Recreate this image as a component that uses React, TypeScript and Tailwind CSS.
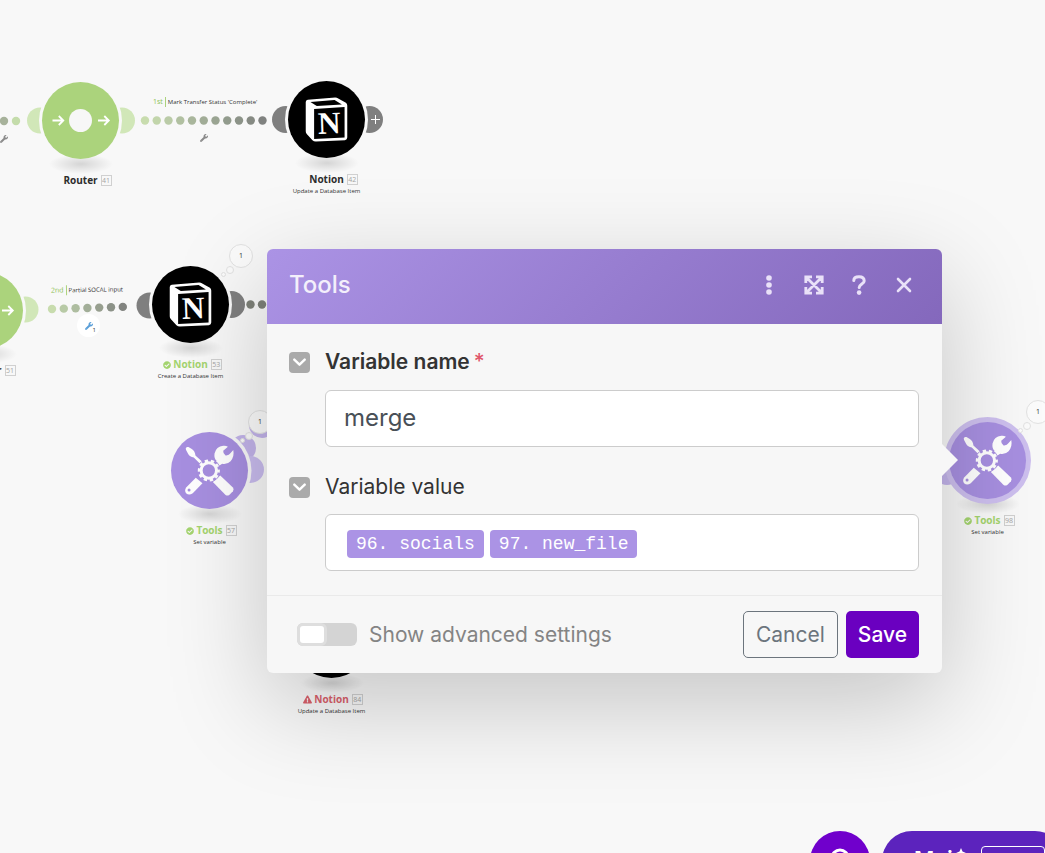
import React, { useState } from 'react';
import { FaCheckCircle, FaExclamationTriangle, FaWrench } from 'react-icons/fa';

const NotionIcon: React.FC = () => (
  <svg viewBox="85 34 230 230" className="w-full h-full" aria-hidden="true">
    <path
      d="M144 90 L226 83 Q231 83 235 86 L258 99 Q262 102 262 107 L262 203 Q262 210 255 211 L168 215 Q162 215 158 211 L141 192 Q138 189 138 184 L138 97 Q138 91 144 90 Z"
      fill="#fff"
    />
    <path d="M152 97 L224 91 L246 104 L171 109 Z" fill="#000" />
    <path d="M163 118 L254 112 L254 203 L163 207 Z" fill="#000" />
    <text x="208" y="191" textAnchor="middle" fontSize="94" fontWeight="700" fill="#fff" fontFamily="'Liberation Serif', serif" transform="rotate(-2 208 161)">
      N
    </text>
  </svg>
);

const ToolsIcon: React.FC = () => (
  <svg viewBox="73 98 230 230" className="w-full h-full" fill="#fff" aria-hidden="true">
    {/* screwdriver */}
    <path d="M117 147 Q118 141 125 143 L134 148 Q145 155 146 168 L168 188 L162 195 L141 174 Q129 173 124 163 L118 152 Z" />
    {/* wrench head */}
    <path d="M203 192 L209 184 Q201 176 203 162 Q208 141 229 139 Q237 138 243 142 L229 154 Q228 163 236 168 Q246 169 251 161 L259 152 Q263 172 251 185 Q240 196 226 193 L212 202 Z" />
    {/* handles */}
    <path d="M147 235 L167 251 L138 281 Q127 289 118 281 Q112 272 119 263 Z" />
    <circle cx="127" cy="271" r="4.5" fill="#a78fe0" />
    <path d="M198 247 L220 228 L258 264 Q262 269 258 275 L247 286 Q241 290 236 286 Z" />
    {/* gear */}
    <circle cx="186" cy="213" r="35" fill="#a78fe0" />
    <circle cx="186" cy="213" r="23" fill="none" stroke="#fff" strokeWidth="9" />
    <circle cx="186" cy="213" r="29" fill="none" stroke="#fff" strokeWidth="8" strokeDasharray="10 8.22" strokeDashoffset="4" />
  </svg>
);

const RouterIcon: React.FC = () => (
  <svg viewBox="0 0 77 77" className="w-full h-full" aria-hidden="true">
    <circle cx="38.5" cy="38.5" r="11.5" fill="#f7f7f7" />
    <g fill="none" stroke="#fff" strokeWidth="1.8">
      <path d="M10.500 38.500h10.500M16.800 34l4.500 4.500-4.500 4.500" />
      <path d="M56 38.500h10.500M62.300 34l4.500 4.500-4.500 4.500" />
    </g>
  </svg>
);

const kinds = {
  router: { bg: 'bg-[#abd37c]', icon: <RouterIcon /> },
  notion: { bg: 'bg-black', icon: <NotionIcon /> },
  tools: { bg: 'bg-[#a78fe0]', icon: <ToolsIcon /> },
};

interface NodeProps {
  kind: keyof typeof kinds;
  place: string;
  title: string;
  id: number;
  subtitle?: string;
  status?: 'ok' | 'error';
  bubble?: boolean;
  selected?: boolean;
}

const titleColors = {
  none: 'text-[#2d2d2d]',
  ok: 'text-[#a4d46f]',
  error: 'text-[#d9606b]',
};

const Node: React.FC<NodeProps> = ({ kind, place, title, id, subtitle, status, bubble, selected }) => (
  <div className={`absolute flex w-[77px] flex-col items-center ${place}`}>
    <div className="absolute top-[72px] h-5 w-16 bg-[radial-gradient(closest-side,#00000024,transparent)]" />
    <div className={`relative size-[77px] rounded-full ${kinds[kind].bg} ${selected ? 'ring-5 ring-[#cdbfee]' : ''}`}>
      {kinds[kind].icon}
    </div>
    {bubble && (
      <>
        <span className="absolute left-[77px] -top-[22px] flex size-6 items-center justify-center rounded-full border border-[#e2e2e2] bg-[#fbfbfb] text-[7px] text-[#333]">1</span>
        <span className="absolute left-[74px] top-0 size-2 rounded-full border border-[#e2e2e2] bg-[#fbfbfb]" />
        <span className="absolute left-[69px] top-[6px] size-[5px] rounded-full border border-[#e2e2e2] bg-[#fbfbfb]" />
      </>
    )}
    <div className={`relative mt-[15px] text-[10px] leading-3 font-bold ${titleColors[status ?? 'none']}`}>
      {status === 'ok' && <FaCheckCircle className="absolute right-full top-[3px] mr-[2px] size-2" />}
      {status === 'error' && <FaExclamationTriangle className="absolute right-full top-[2px] mr-[2px] size-[9px]" />}
      {title}
      <span className="absolute left-full top-[1px] ml-[3px] flex h-[11px] w-[11px] items-center justify-center border border-[#d0d0d0] text-[7px] font-normal text-[#a5a5a5]">
        {id}
      </span>
    </div>
    {subtitle && <div className="text-[6px] leading-3 whitespace-nowrap text-[#333]">{subtitle}</div>}
  </div>
);

const firstRoute = ['#c8dcae', '#c2d5ab', '#bacba7', '#b1c0a1', '#a9b69c', '#a1ac97', '#9aa492', '#929b8d', '#8c9388', '#868a83', '#808280'];
const secondRoute = ['#c8dcae', '#b8caa6', '#aebda0', '#a2ae98', '#979f8f', '#8c9288', '#828480'];

const Links: React.FC = () => (
  <svg className="absolute inset-0 h-full w-full" aria-hidden="true">
    <g fill="#d1e7b8">
      <circle cx="40" cy="120.500" r="13" />
      <circle cx="122" cy="120.500" r="13" />
      <circle cx="25.500" cy="309.500" r="13" />
    </g>
    <g fill="#7f7f7f">
      <circle cx="285.500" cy="119.500" r="13.500" />
      <circle cx="369.500" cy="119.500" r="13.500" />
      <circle cx="149.500" cy="305.500" r="13" />
      <circle cx="231.500" cy="304.500" r="13.500" />
    </g>
    <g fill="#c3b4ea">
      <circle cx="243" cy="448" r="13" />
      <circle cx="262" cy="425" r="13" />
      <circle cx="947" cy="472" r="13" />
    </g>
    <circle cx="250.500" cy="469.500" r="13.500" fill="#c9bcee" />
    {/* gap between a node and its ports */}
    <g fill="#f8f8f8">
      <circle cx="80.500" cy="120.500" r="41.500" />
      <circle cx="326.500" cy="119.500" r="41.500" />
      <circle cx="-15.500" cy="310.500" r="41.500" />
      <circle cx="190.500" cy="304.500" r="41.500" />
      <circle cx="209.500" cy="470.500" r="42" />
    </g>
    <path d="M371 119.500h9M375.500 115v9" stroke="#fff" strokeWidth="1" />
    <circle cx="4" cy="121" r="4.200" fill="#a7b29b" />
    <circle cx="16" cy="121" r="4.200" fill="#c4dcab" />
    {firstRoute.map((color, i) => (
      <circle key={color} cx={145 + i * 11.75} cy="120.500" r="4.200" fill={color} />
    ))}
    {secondRoute.map((color, i) => (
      <circle key={color} cx={52 + i * 11.8} cy={309 - i * 0.35} r="4.200" fill={color} />
    ))}
    <circle cx="250.500" cy="304.500" r="4.200" fill="#7d8078" />
    <circle cx="262" cy="304.500" r="4.200" fill="#7d8078" />
  </svg>
);

const RouteLabel: React.FC<{ place: string; order: string; text: string }> = ({ place, order, text }) => (
  <div className={`absolute flex items-center gap-[2px] whitespace-nowrap ${place}`}>
    <span className="text-[7px] leading-[10px] text-[#8cc152]">{order}</span>
    <span className="h-[10px] w-px bg-[#abd37c]" />
    <span className="text-[6px] leading-[10px] text-[#333]">{text}</span>
  </div>
);

const Collapse: React.FC<{ label: string }> = ({ label }) => (
  <button type="button" aria-label={label} className="flex size-[21px] shrink-0 items-center justify-center rounded bg-[#aaa]">
    <svg viewBox="0 0 12 8" className="w-[13px]" fill="none" stroke="#fff" strokeWidth="2.200" strokeLinecap="round" strokeLinejoin="round">
      <path d="M1.200 1.500 6 6.200l4.800-4.700" />
    </svg>
  </button>
);

const Dialog: React.FC = () => {
  const [name, setName] = useState('merge');
  const [advanced, setAdvanced] = useState(false);

  return (
    <section
      role="dialog"
      aria-labelledby="dialog-title"
      className="absolute left-[267px] top-[249px] w-[675px] rounded-md bg-[#f7f7f7] font-[Inter,sans-serif] shadow-[0_30px_100px_rgba(0,0,0,0.21)]"
    >
      <svg viewBox="0 0 16 32" className="absolute left-full top-[195px] h-8 w-4" aria-hidden="true">
        <path d="M0 0 16 16 0 32Z" fill="#f7f7f7" />
      </svg>

      <header className="flex h-[75px] items-center justify-between rounded-t-md bg-linear-135 from-[#ab93e5] to-[#8468bc] pr-4 pb-[3px] pl-[22px] text-[#e9e1f8]">
        <h2 id="dialog-title" className="text-2xl font-medium text-[#f3effb]">Tools</h2>
        <div className="flex">
          <button type="button" aria-label="More" className="flex h-11 w-[45px] items-center justify-center">
            <svg viewBox="0 0 6 20" className="h-5" fill="currentColor">
              <circle cx="3" cy="3" r="2.800" />
              <circle cx="3" cy="10" r="2.800" />
              <circle cx="3" cy="17" r="2.800" />
            </svg>
          </button>
          <button type="button" aria-label="Expand" className="flex h-11 w-[45px] items-center justify-center">
            <svg viewBox="0 0 20 20" className="size-5" fill="none" stroke="currentColor" strokeWidth="2.800">
              <path d="M8 1.800H1.800V8M12 1.800h6.200V8M8 18.200H1.800V12M12 18.200h6.200V12M2 2l16 16M18 2 2 18" />
            </svg>
          </button>
          <button type="button" aria-label="Help" className="flex h-11 w-[45px] items-center justify-center">
            <svg viewBox="0 0 14 20" className="h-5" fill="none" stroke="currentColor" strokeWidth="3" strokeLinecap="round">
              <path d="M1.800 5.600C1.800 3 4 1.700 7 1.700s5.200 1.500 5.200 4.200C12.200 9 7.200 9 7.200 12.600" />
              <circle cx="7.100" cy="17.600" r="2.300" fill="currentColor" stroke="none" />
            </svg>
          </button>
          <button type="button" aria-label="Close" className="flex h-11 w-[45px] items-center justify-center">
            <svg viewBox="0 0 16 16" className="size-4" fill="none" stroke="currentColor" strokeWidth="2.600" strokeLinecap="round">
              <path d="M2 2l12 12M14 2 2 14" />
            </svg>
          </button>
        </div>
      </header>

      <div className="flex flex-col gap-[26px] pt-6 pr-[23px] pb-6 pl-[22px]">
        <div>
          <div className="flex h-7 items-center gap-[15px]">
            <Collapse label="Collapse variable name" />
            <label htmlFor="variable-name" className="text-[21px] leading-7 font-semibold text-[#333]">
              Variable name<span className="pl-1 font-medium text-[#e0566a]">*</span>
            </label>
          </div>
          <input
            id="variable-name"
            value={name}
            onChange={(e) => setName(e.target.value)}
            className="mt-[14px] ml-9 block h-[57px] w-[calc(100%-36px)] rounded-md border border-[#ccc] bg-white px-[18px] pb-[2px] text-2xl text-[#495057] outline-none"
          />
        </div>

        <div>
          <div className="flex h-7 items-center gap-[15px]">
            <Collapse label="Collapse variable value" />
            <label htmlFor="variable-value" className="text-[21px] leading-7 text-[#333]">Variable value</label>
          </div>
          <div className="mt-[13px] ml-9 flex h-[57px] items-center gap-[6px] rounded-md border border-[#ccc] bg-white px-[21px] pt-[2px] font-['Liberation_Mono',monospace] text-lg text-white">
            <span className="h-7 rounded bg-[#ab93e5] px-[9px] leading-7 whitespace-pre">96. socials</span>
            <span className="h-7 rounded bg-[#ab93e5] px-[9px] leading-7 whitespace-pre">97. new_file</span>
            <input id="variable-value" className="min-w-0 flex-1 text-[#495057] outline-none" />
          </div>
        </div>
      </div>

      <footer className="flex h-[78px] items-center justify-between border-t border-[#eaeaea] pr-[23px] pl-[30px]">
        <label className="flex items-center gap-3 text-[21px] text-[#848484]">
          <input
            type="checkbox"
            checked={advanced}
            onChange={(e) => setAdvanced(e.target.checked)}
            className="flex h-[23px] w-[60px] appearance-none items-center rounded-md bg-[#d4d4d4] before:h-[23px] before:w-[30px] before:rounded-md before:border-3 before:border-[#dedede] before:bg-white before:content-[''] checked:justify-end"
          />
          Show advanced settings
        </label>
        <div className="flex gap-2 text-[21px]">
          <button type="button" className="h-[47px] rounded-[5px] border border-[#6c757d] px-3 text-[#6c757d]">Cancel</button>
          <button type="button" className="h-[47px] rounded-[5px] bg-[#6a00c0] px-3 font-medium text-white">Save</button>
        </div>
      </footer>
    </section>
  );
};

const App: React.FC = () => (
  <main className="relative h-screen overflow-hidden bg-[#f8f8f8] font-['Open_Sans',sans-serif]">
    <Links />

    <RouteLabel place="left-[153px] top-[97px]" order="1st" text="Mark Transfer Status 'Complete'" />
    <RouteLabel place="left-[51px] top-[285px] -rotate-1" order="2nd" text="Partial SOCAL input" />
    <FaWrench className="absolute left-0 top-[135px] size-2 text-[#8a8a8a]" />
    <FaWrench className="absolute left-[200px] top-[134px] size-2 text-[#8a8a8a]" />
    <div className="absolute left-[77px] top-[314px] flex size-[23px] items-center justify-center rounded-full bg-white text-[6px] text-[#333]">
      <FaWrench className="size-2 text-[#5a9fd8]" />
      <span className="absolute right-1 bottom-[3px] leading-[7px]">1</span>
    </div>

    <Node kind="router" place="left-[42px] top-[82px]" title="Router" id={41} />
    <Node kind="notion" place="left-[288px] top-[81px]" title="Notion" id={42} subtitle="Update a Database Item" />
    <Node kind="router" place="-left-[54px] top-[272px]" title="Router" id={51} />
    <Node kind="notion" place="left-[152px] top-[266px]" title="Notion" id={53} subtitle="Create a Database Item" status="ok" bubble />
    <Node kind="tools" place="left-[171px] top-[432px]" title="Tools" id={57} subtitle="Set variable" status="ok" bubble />
    <Node kind="notion" place="left-[293px] top-[601px]" title="Notion" id={84} subtitle="Update a Database Item" status="error" />
    <Node kind="tools" place="left-[949px] top-[422px]" title="Tools" id={98} subtitle="Set variable" status="ok" bubble selected />

    <Dialog />

    <div className="absolute -right-5 -bottom-[38px] flex gap-3 font-[Inter,sans-serif]">
      <button type="button" aria-label="Help" className="flex size-[60px] justify-center rounded-full bg-[#7000cc] pt-4">
        <svg viewBox="0 0 24 24" className="size-6" fill="none" stroke="#fff" strokeWidth="3" strokeLinecap="round">
          <path d="M4 11a8 8 0 0 1 16 0c0 5-8 5-8 9" />
        </svg>
      </button>
      <button type="button" className="flex h-[60px] w-[183px] rounded-full bg-[#5c23bd] pl-8 text-[22px] font-semibold text-white">
        <span className="relative pt-3 leading-8">
          Maia
          <svg viewBox="0 0 10 10" className="absolute -right-px top-[17px] size-[10px]" fill="#fff" aria-hidden="true">
            <path d="M5 0 6.500 3.500 10 5 6.500 6.500 5 10 3.500 6.500 0 5 3.500 3.500Z" />
          </svg>
        </span>
        <span className="mt-[15px] ml-4 h-7 w-16 rounded border border-white" />
      </button>
    </div>
  </main>
);

export default App;
